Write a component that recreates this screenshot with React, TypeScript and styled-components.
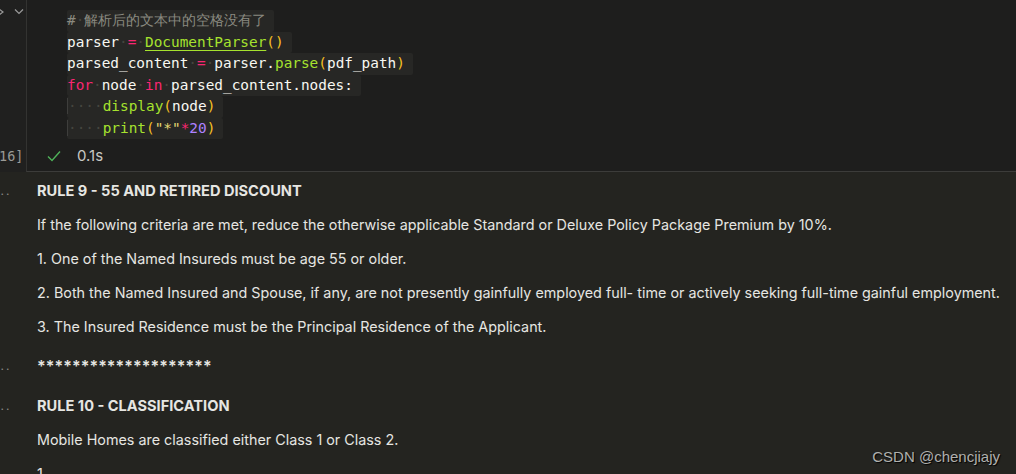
import styled, { createGlobalStyle } from 'styled-components';

const GlobalStyle = createGlobalStyle`
  html, body {
    margin: 0;
    padding: 0;
    background: #242420;
  }
`;

type Tok = { t: string; c?: string; u?: boolean };

const C = {
  plain: '#f8f8f2',
  comment: '#8a8a80',
  op: '#f92672',
  fn: '#a6e22e',
  paren: '#f6c022',
  str: '#e6db74',
  num: '#ae81ff',
};

// 🔹 Code lines of the cell
const codeLines: { indent: number; toks: Tok[] }[] = [
  { indent: 0, toks: [{ t: '# 解析后的文本中的空格没有了', c: C.comment }] },
  {
    indent: 0,
    toks: [
      { t: 'parser ' },
      { t: '=', c: C.op },
      { t: ' ' },
      { t: 'DocumentParser', c: C.fn, u: true },
      { t: '()', c: C.paren },
    ],
  },
  {
    indent: 0,
    toks: [
      { t: 'parsed_content ' },
      { t: '=', c: C.op },
      { t: ' parser.' },
      { t: 'parse', c: C.fn },
      { t: '(', c: C.paren },
      { t: 'pdf_path' },
      { t: ')', c: C.paren },
    ],
  },
  {
    indent: 0,
    toks: [
      { t: 'for', c: C.op },
      { t: ' node ' },
      { t: 'in', c: C.op },
      { t: ' parsed_content.nodes:' },
    ],
  },
  {
    indent: 4,
    toks: [
      { t: 'display', c: C.fn },
      { t: '(', c: C.paren },
      { t: 'node' },
      { t: ')', c: C.paren },
    ],
  },
  {
    indent: 4,
    toks: [
      { t: 'print', c: C.fn },
      { t: '(', c: C.paren },
      { t: '"*"', c: C.str },
      { t: '*', c: C.op },
      { t: '20', c: C.num },
      { t: ')', c: C.paren },
    ],
  },
];

// spaces drawn as dots (render whitespace)
const renderText = (text: string) =>
  text.split(/( )/).map((part, i) =>
    part === ' ' ? <Dot key={i}>·</Dot> : <span key={i}>{part}</span>
  );

const outputBlocks: { kind: 'md' | 'stars'; items: { h?: boolean; text: string }[] }[] = [
  {
    kind: 'md',
    items: [
      { h: true, text: 'RULE 9 - 55 AND RETIRED DISCOUNT' },
      {
        text: 'If the following criteria are met, reduce the otherwise applicable Standard or Deluxe Policy Package Premium by 10%.',
      },
      { text: '1. One of the Named Insureds must be age 55 or older.' },
      {
        text: '2. Both the Named Insured and Spouse, if any, are not presently gainfully employed full- time or actively seeking full-time gainful employment.',
      },
      { text: '3. The Insured Residence must be the Principal Residence of the Applicant.' },
    ],
  },
  { kind: 'stars', items: [{ text: '********************' }] },
  {
    kind: 'md',
    items: [
      { h: true, text: 'RULE 10 - CLASSIFICATION' },
      { text: 'Mobile Homes are classified either Class 1 or Class 2.' },
      { text: '1.' },
    ],
  },
];

export default function App() {
  return (
    <Page>
      <GlobalStyle />
      <CellRow>
        <Gutter>
          <GutterIcons>
            <svg width="6" height="10" viewBox="0 0 6 10">
              <path d="M-1 3 L3 6 L-1 9" fill="none" stroke="#9a9a9a" strokeWidth="1.2" />
            </svg>
            <svg width="10" height="7" viewBox="0 0 10 7">
              <path d="M1 1.5 L5 5.5 L9 1.5" fill="none" stroke="#9a9a9a" strokeWidth="1.2" />
            </svg>
          </GutterIcons>
          <ExecCount>16]</ExecCount>
        </Gutter>
        <Editor>
          <Code>
            {codeLines.map((line, i) => (
              <CodeLine key={i}>
                <LineBg>
                  {line.indent > 0 && (
                    <Indent>
                      <Dot>{'····'}</Dot>
                    </Indent>
                  )}
                  {line.toks.map((tok, j) => (
                    <Token key={j} $c={tok.c ?? C.plain} $u={!!tok.u}>
                      {renderText(tok.t)}
                    </Token>
                  ))}
                </LineBg>
              </CodeLine>
            ))}
          </Code>
          <Status>
            <svg width="16" height="14" viewBox="0 0 16 14">
              <path d="M2 7.5 L6 11.5 L14 2.5" fill="none" stroke="#4fb35a" strokeWidth="1.4" />
            </svg>
            <Time>0.1s</Time>
          </Status>
        </Editor>
      </CellRow>

      <Output>
        {outputBlocks.map((block, i) => (
          <OutBlock key={i} $stars={block.kind === 'stars'}>
            <OutGutter>
              <Ellipsis>...</Ellipsis>
            </OutGutter>
            <OutBody>
              {block.items.map((it, j) =>
                it.h ? (
                  <Heading key={j}>{it.text}</Heading>
                ) : (
                  <Para key={j} $stars={block.kind === 'stars'}>
                    {it.text}
                  </Para>
                )
              )}
            </OutBody>
          </OutBlock>
        ))}
      </Output>

      <Watermark>CSDN @chencjiajy</Watermark>
    </Page>
  );
}

// **📌 Page**
const Page = styled.div`
  position: relative;
  width: 1016px;
  height: 474px;
  overflow: hidden;
  background: #242420;
  font-family: Inter, 'Liberation Sans', sans-serif;
`;

// **📌 Code cell**
const CellRow = styled.div`
  display: flex;
  height: 172px;
  background: #1f1f1e;
`;

const Gutter = styled.div`
  width: 26px;
  display: flex;
  flex-direction: column;
  justify-content: space-between;
  background: #20201f;
  padding: 6px 0 6px 0;
  box-sizing: border-box;
`;

const GutterIcons = styled.div`
  display: flex;
  align-items: center;
  gap: 8px;
`;

const ExecCount = styled.div`
  font-family: 'DejaVu Sans Mono', monospace;
  font-size: 13.5px;
  color: #9a9a96;
  margin-left: -1px;
  margin-bottom: 2px;
`;

const Editor = styled.div`
  flex: 1;
  display: flex;
  flex-direction: column;
  border-left: 1px solid #333331;
  border-bottom: 1px solid #3c3c3a;
  background: #1e1e1d;
`;

const Code = styled.div`
  padding: 10px 0 0 40px;
  font-family: 'DejaVu Sans Mono', monospace;
  font-size: 14.4px;
`;

const CodeLine = styled.div`
  height: 21.5px;
  line-height: 21.5px;
  white-space: pre;
`;

const LineBg = styled.span`
  display: inline-block;
  height: 21.5px;
  padding-right: 8px;
  background: #272725;
  border-radius: 2px;
`;

const Indent = styled.span`
  border-left: 1px solid #3e3e3c;
`;

const Dot = styled.span`
  color: #45453f;
`;

const Token = styled.span<{ $c: string; $u: boolean }>`
  color: ${({ $c }) => $c};
  text-decoration: ${({ $u }) => ($u ? 'underline' : 'none')};
  text-decoration-color: ${({ $c }) => $c};
  text-underline-offset: 3px;
`;

const Status = styled.div`
  display: flex;
  align-items: center;
  gap: 15px;
  margin-top: 7px;
  padding-left: 19px;
`;

const Time = styled.span`
  font-size: 15px;
  color: #c8c8c4;
`;

// **📌 Output**
const Output = styled.div`
  display: flex;
  flex-direction: column;
  padding-top: 10px;
`;

const OutBlock = styled.div<{ $stars: boolean }>`
  display: flex;
  margin-bottom: ${({ $stars }) => ($stars ? '22px' : '21px')};
`;

const OutGutter = styled.div`
  width: 37px;
  flex-shrink: 0;
`;

const Ellipsis = styled.div`
  font-size: 12px;
  line-height: 18px;
  color: #8a8a86;
  letter-spacing: 2px;
  margin-left: -5px;
`;

const OutBody = styled.div`
  display: flex;
  flex-direction: column;
  gap: 16px;
  color: #e6e6e2;
  font-size: 14.35px;
  line-height: 18px;
`;

const Heading = styled.div`
  font-weight: 700;
  font-size: 14.6px;
`;

const Para = styled.div<{ $stars: boolean }>`
  white-space: nowrap;
  font-size: ${({ $stars }) => ($stars ? '16px' : 'inherit')};
  letter-spacing: ${({ $stars }) => ($stars ? '0.1px' : '0')};
  font-weight: ${({ $stars }) => ($stars ? 600 : 400)};
`;

const Watermark = styled.div`
  position: absolute;
  right: 16px;
  bottom: 9px;
  font-size: 15px;
  color: #b0b0ae;
  text-shadow: 1px 1px 1px #000;
  font-family: 'Liberation Sans', sans-serif;
`;
